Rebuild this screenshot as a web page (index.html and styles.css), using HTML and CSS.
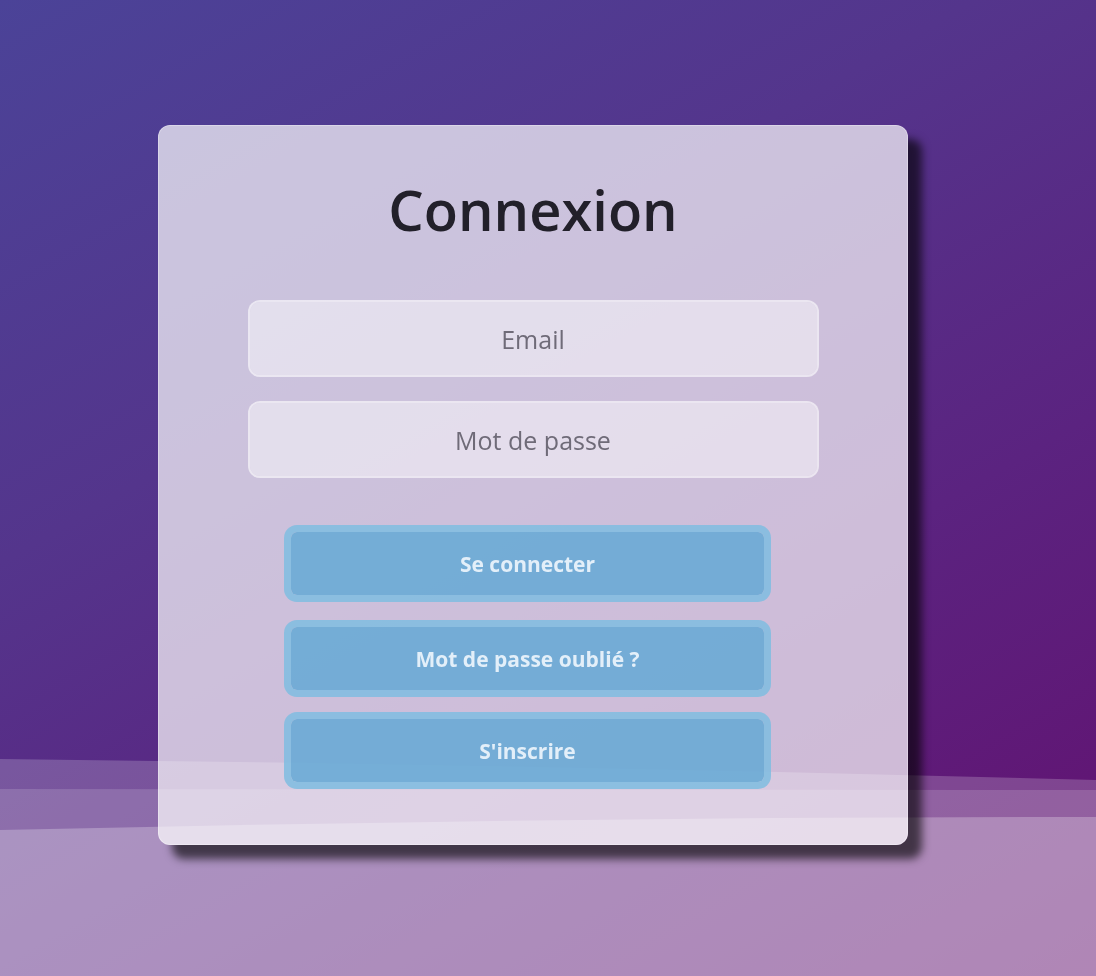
FILE: index.html
```html
<!DOCTYPE html>
<html lang="fr">
<head>
<meta charset="utf-8">
<title>Connexion</title>
<link rel="stylesheet" href="styles.css">
</head>
<body>
<svg class="waves" viewBox="0 0 1096 217" preserveAspectRatio="none" aria-hidden="true">
  <path d="M0 0 Q548 6 1096 21 L1096 217 L0 217 Z" fill="#ffffff" fill-opacity="0.2"/>
  <path d="M0 30 L1096 31 L1096 217 L0 217 Z" fill="#ffffff" fill-opacity="0.15"/>
  <path d="M0 71 Q548 58 1096 58 L1096 217 L0 217 Z" fill="#ffffff" fill-opacity="0.26"/>
</svg>
<main class="page">
  <form class="card">
    <h1 class="title">Connexion</h1>
    <div class="fields">
      <input class="field" type="email" placeholder="Email">
      <input class="field" type="password" placeholder="Mot de passe">
    </div>
    <div class="actions">
      <button class="btn btn-first" type="button">Se connecter</button>
      <button class="btn btn-second" type="button">Mot de passe oublié ?</button>
      <button class="btn btn-third" type="button">S'inscrire</button>
    </div>
  </form>
</main>
</body>
</html>
```
FILE: styles.css
```css
html, body {
  margin: 0;
  padding: 0;
  height: 100%;
}

body {
  font-family: "Open Sans", "Noto Sans", sans-serif;
  background: linear-gradient(150deg, #4b4398 0%, #54358c 35%, #5b2380 65%, #63106f 100%);
  min-height: 100vh;
  overflow: hidden;
}

.waves {
  position: fixed;
  left: 0;
  bottom: 0;
  width: 100%;
  height: 217px;
  z-index: 0;
}

.page {
  position: relative;
  z-index: 1;
  min-height: 100vh;
  box-sizing: border-box;
  padding-right: 30px;
  padding-bottom: 6px;
  display: flex;
  align-items: center;
  justify-content: center;
}

.card {
  width: 750px;
  height: 720px;
  box-sizing: border-box;
  background: rgba(255, 255, 255, 0.7);
  border: 1.5px solid rgba(255, 255, 255, 0.3);
  border-radius: 12px;
  box-shadow: 14px 14px 9px rgba(0, 0, 0, 0.62);
  display: flex;
  flex-direction: column;
  align-items: center;
  padding-top: 45px;
}

.title {
  margin: 0;
  font-size: 56px;
  font-weight: 600;
  line-height: 77px;
  color: #22202a;
}

.fields {
  margin-top: 52px;
  display: flex;
  flex-direction: column;
  gap: 24px;
}

.field {
  width: 571px;
  height: 77px;
  box-sizing: border-box;
  border: 2px solid rgba(255, 255, 255, 0.6);
  border-radius: 12px;
  background: rgba(255, 255, 255, 0.46);
  background-clip: padding-box;
  font-family: "Open Sans", "Noto Sans", sans-serif;
  font-size: 25px;
  text-align: center;
  color: #3a3642;
  outline: none;
}

.field::placeholder {
  color: #6f6b78;
  opacity: 1;
}

.actions {
  margin-top: 47px;
  margin-right: 11px;
  display: flex;
  flex-direction: column;
}

.btn {
  width: 487px;
  height: 77px;
  box-sizing: border-box;
  border: 7px solid rgba(127, 189, 225, 0.85);
  border-radius: 13px;
  background: rgba(100, 169, 213, 0.85);
  background-clip: padding-box;
  font-family: "Open Sans", "Noto Sans", sans-serif;
  font-size: 21px;
  font-weight: 700;
  color: #e3eff9;
  cursor: pointer;
}

.btn-second {
  margin-top: 18px;
}

.btn-third {
  margin-top: 15px;
}
```
